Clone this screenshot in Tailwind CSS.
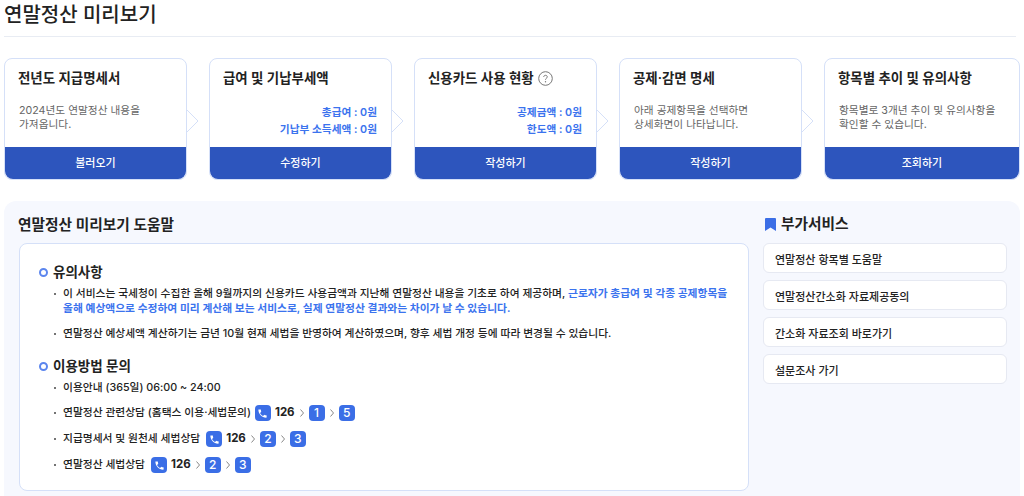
<!DOCTYPE html>
<html lang="ko">
<head>
    <meta charset="UTF-8">
    <title>연말정산 미리보기</title>
    <script src="https://cdn.jsdelivr.net/npm/@tailwindcss/browser@4"></script>
</head>
<body class="bg-white h-[496px] overflow-hidden font-['Inter','Noto_Sans_CJK_KR',sans-serif] text-[#222]">
    <div class="px-1">
        <header class="h-[37px] border-b border-[#e8ecf3] mr-[4px]">
            <h1 class="text-[20px] leading-[30px] font-medium">연말정산 미리보기</h1>
        </header>

        <!-- step cards -->
        <div class="flex gap-[22px] mt-[21px]">
            <div class="relative w-[183px] h-[122px] flex flex-col border border-[#d5e0f8] rounded-lg">
                <h2 class="pl-[13px] pt-[8px] text-[13.45px] leading-[22px] font-semibold">전년도 지급명세서</h2>
                <p class="flex-1 pl-[14px] pt-[15px] text-[10.7px] leading-[14px] text-[#666]">2024년도 연말정산 내용을<br>가져옵니다.</p>
                <svg class="absolute left-[181px] top-[50px]" width="13" height="24" viewBox="0 0 13 24"><path d="M1 1 L12 12 L1 23" fill="#fff" stroke="#d5e0f8"/></svg>
                <button class="h-[32px] bg-[#2d55bd] rounded-b-lg text-white text-[11px] font-medium">불러오기</button>
            </div>
            <div class="relative w-[183px] h-[122px] flex flex-col border border-[#d5e0f8] rounded-lg">
                <h2 class="pl-[13px] pt-[8px] text-[13.45px] leading-[22px] font-semibold">급여 및 기납부세액</h2>
                <div class="flex-1 pr-[14px] pt-[15px] text-right text-[10.7px] leading-[17px] font-semibold text-[#3b73ee]">
                    <p>총급여 : 0원</p>
                    <p>기납부 소득세액 : 0원</p>
                </div>
                <svg class="absolute left-[181px] top-[50px]" width="13" height="24" viewBox="0 0 13 24"><path d="M1 1 L12 12 L1 23" fill="#fff" stroke="#d5e0f8"/></svg>
                <button class="h-[32px] bg-[#2d55bd] rounded-b-lg text-white text-[11px] font-medium">수정하기</button>
            </div>
            <div class="relative w-[183px] h-[122px] flex flex-col border border-[#d5e0f8] rounded-lg">
                <h2 class="flex items-center gap-[4px] pl-[13px] pt-[8px] text-[13.45px] leading-[22px] font-semibold">신용카드 사용 현황
                    <svg width="15" height="15" viewBox="0 0 15 15" fill="none"><circle cx="7.5" cy="7.5" r="6.8" stroke="#777"/><path d="M5.7 6c0-1 .8-1.700 1.800-1.700s1.800.7 1.800 1.600c0 1.300-1.800 1.400-1.800 2.800" stroke="#777" stroke-width="1"/><circle cx="7.500" cy="10.800" r=".7" fill="#777"/></svg>
                </h2>
                <div class="flex-1 pr-[14px] pt-[15px] text-right text-[10.7px] leading-[17px] font-semibold text-[#3b73ee]">
                    <p>공제금액 : 0원</p>
                    <p>한도액 : 0원</p>
                </div>
                <svg class="absolute left-[181px] top-[50px]" width="13" height="24" viewBox="0 0 13 24"><path d="M1 1 L12 12 L1 23" fill="#fff" stroke="#d5e0f8"/></svg>
                <button class="h-[32px] bg-[#2d55bd] rounded-b-lg text-white text-[11px] font-medium">작성하기</button>
            </div>
            <div class="relative w-[183px] h-[122px] flex flex-col border border-[#d5e0f8] rounded-lg">
                <h2 class="pl-[13px] pt-[8px] text-[13.45px] leading-[22px] font-semibold">공제·감면 명세</h2>
                <p class="flex-1 pl-[14px] pt-[15px] text-[10.7px] leading-[14px] text-[#666]">아래 공제항목을 선택하면<br>상세화면이 나타납니다.</p>
                <svg class="absolute left-[181px] top-[50px]" width="13" height="24" viewBox="0 0 13 24"><path d="M1 1 L12 12 L1 23" fill="#fff" stroke="#d5e0f8"/></svg>
                <button class="h-[32px] bg-[#2d55bd] rounded-b-lg text-white text-[11px] font-medium">작성하기</button>
            </div>
            <div class="relative flex-1 h-[122px] flex flex-col border border-[#d5e0f8] rounded-lg">
                <h2 class="pl-[13px] pt-[8px] text-[13.45px] leading-[22px] font-semibold">항목별 추이 및 유의사항</h2>
                <p class="flex-1 pl-[14px] pt-[15px] text-[10.7px] leading-[14px] text-[#666]">항목별로 3개년 추이 및 유의사항을<br>확인할 수 있습니다.</p>
                <button class="h-[32px] bg-[#2d55bd] rounded-b-lg text-white text-[11px] font-medium">조회하기</button>
            </div>
        </div>

        <!-- help panel -->
        <div class="flex gap-[14px] mt-[21px] h-[300px] bg-[#f6f8fe] rounded-t-xl pl-[15px] pr-[13px]">
            <div class="w-[730px]">
                <h2 class="h-[42px] pt-[12px] -ml-[1px] text-[14.700px] leading-[24px] font-semibold">연말정산 미리보기 도움말</h2>
                <div class="h-[248px] bg-white border border-[#d5e0f8] rounded-lg pl-[20px] pt-[18px] font-medium">
                    <h3 class="flex items-center gap-[5px] text-[13.5px] leading-[20px] font-semibold">
                        <span class="size-[9px] rounded-full border-2 border-[#5c86ee] -ml-[1px]"></span>유의사항
                    </h3>
                    <ul class="mt-[4px] text-[10.75px]">
                        <li class="flex gap-[7px] leading-[15px]">
                            <span class="mt-[7px] size-[2px] shrink-0 ml-[14px] bg-[#444] rounded-full"></span>
                            <p class="w-[670px]">이 서비스는 국세청이 수집한 올해 9월까지의 신용카드 사용금액과 지난해 연말정산 내용을 기초로 하여 제공하며, <b class="font-semibold text-[#3b73ee]">근로자가 총급여 및 각종 공제항목을 올해 예상액으로 수정하여 미리 계산해 보는 서비스로, 실제 연말정산 결과와는 차이가 날 수 있습니다.</b></p>
                        </li>
                        <li class="flex gap-[7px] leading-[15px] mt-[10px]">
                            <span class="mt-[7px] size-[2px] shrink-0 ml-[14px] bg-[#444] rounded-full"></span>
                            <p>연말정산 예상세액 계산하기는 금년 10월 현재 세법을 반영하여 계산하였으며, 향후 세법 개정 등에 따라 변경될 수 있습니다.</p>
                        </li>
                    </ul>
                    <h3 class="flex items-center gap-[5px] mt-[15px] text-[13.5px] leading-[20px] font-semibold">
                        <span class="size-[9px] rounded-full border-2 border-[#5c86ee] -ml-[1px]"></span>이용방법 문의
                    </h3>
                    <ul class="mt-[4px] text-[10.75px]">
                        <li class="flex items-center gap-[7px] h-[16px] pl-[14px]">
                            <span class="size-[2px] bg-[#444] rounded-full"></span>이용안내 (365일) 06:00 ~ 24:00
                        </li>
                        <li class="flex items-center gap-[7px] h-[16px] mt-[9px] pl-[14px]">
                            <span class="size-[2px] bg-[#444] rounded-full"></span>연말정산 관련상담 (홈택스 이용·세법문의)
                            <span class="flex items-center gap-[5px] -ml-[3px]">
                                <span class="flex items-center justify-center size-[16px] rounded-[4px] bg-[#3b6ee6]"><svg width="11" height="11" viewBox="0 0 24 24" fill="#fff"><path d="M6.600 10.800c1.400 2.800 3.800 5.100 6.600 6.600l2.200-2.200c.3-.3.7-.4 1-.2 1.100.4 2.300.6 3.600.6.600 0 1 .4 1 1V20c0 .6-.4 1-1 1C10.600 21 3 13.400 3 4c0-.6.4-1 1-1h3.500c.6 0 1 .4 1 1 0 1.300.2 2.500.6 3.600.1.300 0 .7-.2 1z"/></svg></span>
                                <b class="font-bold text-[11.5px] -ml-[1px]">126</b>
                                <svg width="4" height="8" viewBox="0 0 4 8" fill="none"><path d="M.5.5 3.500 4 .5 7.500" stroke="#888"/></svg>
                                <span class="flex items-center justify-center size-[16px] rounded-[4px] bg-[#3b6ee6] text-white text-[12px]">1</span>
                                <svg width="4" height="8" viewBox="0 0 4 8" fill="none"><path d="M.5.5 3.500 4 .5 7.500" stroke="#888"/></svg>
                                <span class="flex items-center justify-center size-[16px] rounded-[4px] bg-[#3b6ee6] text-white text-[12px]">5</span>
                            </span>
                        </li>
                        <li class="flex items-center gap-[7px] h-[16px] mt-[10px] pl-[14px]">
                            <span class="size-[2px] bg-[#444] rounded-full"></span>지급명세서 및 원천세 세법상담
                            <span class="flex items-center gap-[5px] -ml-[1px]">
                                <span class="flex items-center justify-center size-[16px] rounded-[4px] bg-[#3b6ee6]"><svg width="11" height="11" viewBox="0 0 24 24" fill="#fff"><path d="M6.600 10.800c1.400 2.800 3.800 5.100 6.600 6.600l2.200-2.200c.3-.3.7-.4 1-.2 1.100.4 2.300.6 3.600.6.600 0 1 .4 1 1V20c0 .6-.4 1-1 1C10.600 21 3 13.400 3 4c0-.6.4-1 1-1h3.500c.6 0 1 .4 1 1 0 1.300.2 2.500.6 3.600.1.300 0 .7-.2 1z"/></svg></span>
                                <b class="font-bold text-[11.5px] -ml-[1px]">126</b>
                                <svg width="4" height="8" viewBox="0 0 4 8" fill="none"><path d="M.5.5 3.500 4 .5 7.500" stroke="#888"/></svg>
                                <span class="flex items-center justify-center size-[16px] rounded-[4px] bg-[#3b6ee6] text-white text-[12px]">2</span>
                                <svg width="4" height="8" viewBox="0 0 4 8" fill="none"><path d="M.5.5 3.500 4 .5 7.500" stroke="#888"/></svg>
                                <span class="flex items-center justify-center size-[16px] rounded-[4px] bg-[#3b6ee6] text-white text-[12px]">3</span>
                            </span>
                        </li>
                        <li class="flex items-center gap-[7px] h-[16px] mt-[10px] pl-[14px]">
                            <span class="size-[2px] bg-[#444] rounded-full"></span>연말정산 세법상담
                            <span class="flex items-center gap-[5px] -ml-[1px]">
                                <span class="flex items-center justify-center size-[16px] rounded-[4px] bg-[#3b6ee6]"><svg width="11" height="11" viewBox="0 0 24 24" fill="#fff"><path d="M6.600 10.800c1.400 2.800 3.800 5.100 6.600 6.600l2.200-2.200c.3-.3.7-.4 1-.2 1.100.4 2.300.6 3.600.6.600 0 1 .4 1 1V20c0 .6-.4 1-1 1C10.600 21 3 13.400 3 4c0-.6.4-1 1-1h3.500c.6 0 1 .4 1 1 0 1.300.2 2.500.6 3.600.1.300 0 .7-.2 1z"/></svg></span>
                                <b class="font-bold text-[11.5px] -ml-[1px]">126</b>
                                <svg width="4" height="8" viewBox="0 0 4 8" fill="none"><path d="M.5.5 3.500 4 .5 7.500" stroke="#888"/></svg>
                                <span class="flex items-center justify-center size-[16px] rounded-[4px] bg-[#3b6ee6] text-white text-[12px]">2</span>
                                <svg width="4" height="8" viewBox="0 0 4 8" fill="none"><path d="M.5.5 3.500 4 .5 7.500" stroke="#888"/></svg>
                                <span class="flex items-center justify-center size-[16px] rounded-[4px] bg-[#3b6ee6] text-white text-[12px]">3</span>
                            </span>
                        </li>
                    </ul>
                </div>
            </div>
            <aside class="w-[244px]">
                <h2 class="flex items-center gap-[5px] h-[42px] pt-[4px] pl-[2px] text-[14.700px] font-semibold">
                    <svg width="11" height="13" viewBox="0 0 11 13"><path d="M0 1a1 1 0 0 1 1-1h9a1 1 0 0 1 1 1v12L5.500 9.500 0 13z" fill="#3b6ee6"/></svg>부가서비스
                </h2>
                <div class="flex flex-col gap-[7px] text-[11px] font-medium">
                    <a class="flex items-center h-[30px] pl-[11px] pt-[4px] bg-white border border-[#e6e9f2] rounded-md">연말정산 항목별 도움말</a>
                    <a class="flex items-center h-[30px] pl-[11px] pt-[4px] bg-white border border-[#e6e9f2] rounded-md">연말정산간소화 자료제공동의</a>
                    <a class="flex items-center h-[30px] pl-[11px] pt-[4px] bg-white border border-[#e6e9f2] rounded-md">간소화 자료조회 바로가기</a>
                    <a class="flex items-center h-[30px] pl-[11px] pt-[4px] bg-white border border-[#e6e9f2] rounded-md">설문조사 가기</a>
                </div>
            </aside>
        </div>
    </div>
</body>
</html>
